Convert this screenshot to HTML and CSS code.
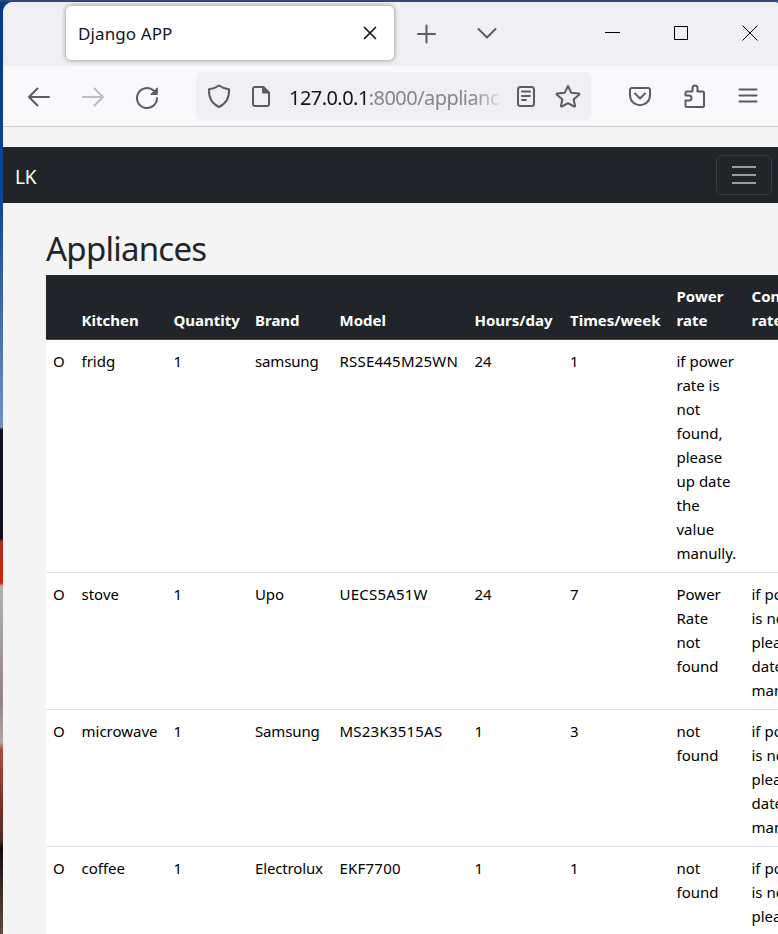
FILE: index.html
```html
<!DOCTYPE html>
<html lang="en">
<head>
<meta charset="utf-8">
<title>Django APP</title>
<link rel="stylesheet" href="styles.css">
</head>
<body>
<div class="window">
  <header class="tabs">
    <div class="tab"><span class="tab-title">Django APP</span>
      <svg class="tab-close" width="14" height="14" viewBox="0 0 14 14"><path d="M1.5 1.5l11 11M12.5 1.5l-11 11"/></svg>
    </div>
    <svg class="new-tab" width="20" height="20" viewBox="0 0 20 20"><path d="M10.500 1.500v17M2 10h17"/></svg>
    <svg class="tab-list" width="20" height="20" viewBox="0 0 20 20"><path d="M1.500 6l8.500 8.500L18.500 6"/></svg>
    <svg class="win minimize" width="16" height="16" viewBox="0 0 16 16"><path d="M1 7.500h15"/></svg>
    <svg class="win maximize" width="16" height="16" viewBox="0 0 16 16"><path d="M1.500 1.500h13v13h-13z"/></svg>
    <svg class="win close" width="16" height="16" viewBox="0 0 16 16"><path d="M.5.5l15 15M15.500.5l-15 15"/></svg>
  </header>
  <div class="toolbar">
    <svg class="icon back" viewBox="0 0 24 24"><path d="M22 13H2M10.500 4.500L2 13l8.500 8.500"/></svg>
    <svg class="icon forward" viewBox="0 0 24 24"><path d="M2 13h20M13.500 4.500L22 13l-8.500 8.500"/></svg>
    <svg class="icon reload" viewBox="0 0 24 24"><path d="M22 14a10 10 0 1 1-3.200-7.300"/><path class="fill" d="M22.300 4.200v6.200h-6.200z"/></svg>
    <div class="urlbar">
      <svg class="icon" viewBox="0 0 24 24"><path d="M12 1.500c3 2.200 6 3.400 10 3.800.3 7-1.800 14-10 17.700C3.800 19.300 1.700 12.300 2 5.300c4-.4 7-1.600 10-3.800z"/></svg>
      <svg class="icon page-icon" viewBox="0 0 24 24"><path d="M6 3h8.500l5.500 5.500V20a2 2 0 0 1-2 2H6a2 2 0 0 1-2-2V5a2 2 0 0 1 2-2z"/><path class="fill" d="M13.500 3V9h6z"/></svg>
      <div class="address"><span class="host">127.0.0.1</span>:8000/applianc</div>
      <svg class="icon reader" viewBox="0 0 24 24"><rect x="4" y="3" width="16" height="19" rx="2.500"/><path d="M8 7.500h8M8 12h8M8 16h4"/></svg>
      <svg class="icon star" viewBox="0 0 24 24"><path d="M12 1.800l3.100 6.900 7.600.8c.7.1.9.9.4 1.300l-5.500 4.600 1.500 6.300c.1.700-.5 1.100-1.100.8L12 19.200 6 22.500c-.6.3-1.200-.1-1.100-.8l1.500-6.300L.9 10.800c-.5-.4-.3-1.200.4-1.300l7.600-.8z"/></svg>
    </div>
    <svg class="icon pocket" viewBox="0 0 24 24"><path d="M4 4h16a2 2 0 0 1 2 2v5c0 13.500-20 13.500-20 0V6a2 2 0 0 1 2-2zM7 9.500l5 5 5-5"/></svg>
    <svg class="icon puzzle" viewBox="0 0 24 24"><path d="M4 7.500h5.500V4a2.500 2.500 0 0 1 5 0v3.500h5A1.500 1.500 0 0 1 21 9v12.500a1.500 1.500 0 0 1-1.500 1.500H4a1.500 1.500 0 0 1-1.500-1.500v-5H6a2.500 2.500 0 0 0 0-5H2.500V9A1.500 1.500 0 0 1 4 7.500z"/></svg>
    <svg class="icon menu" viewBox="0 0 24 24"><path d="M3.500 5.500h17M3.500 11.500h17M3.500 17.500h17"/></svg>
  </div>
  <main class="page">
    <nav class="navbar"><span class="brand">LK</span>
      <button class="toggler" aria-label="Menu"><svg width="30" height="30" viewBox="0 0 30 30"><path d="M3 7h24M3 15h24M3 23h24"/></svg></button>
    </nav>
    <section class="content">
      <h1>Appliances</h1>
      <table>
        <colgroup><col class="c0"><col class="c1"><col class="c2"><col class="c3"><col class="c4"><col class="c5"><col class="c6"><col class="c7"><col class="c8"></colgroup>
        <thead><tr><th></th><th>Kitchen</th><th>Quantity</th><th>Brand</th><th>Model</th><th>Hours/day</th><th>Times/week</th><th>Power<br>rate</th><th>Consumption<br>rate</th></tr></thead>
        <tbody>
          <tr><td>O</td><td>fridg</td><td>1</td><td class="make">samsung</td><td class="model">RSSE445M25WN</td><td>24</td><td>1</td><td>if power<br>rate is<br>not<br>found,<br>please<br>up date<br>the<br>value<br>manully.</td><td></td></tr>
          <tr><td>O</td><td>stove</td><td>1</td><td class="make">Upo</td><td class="model">UECS5A51W</td><td>24</td><td>7</td><td>Power<br>Rate<br>not<br>found</td><td>if power rate<br>is not found,<br>please up<br>date the value<br>manully.</td></tr>
          <tr><td>O</td><td>microwave</td><td>1</td><td class="make">Samsung</td><td class="model">MS23K3515AS</td><td>1</td><td>3</td><td>not<br>found</td><td>if power rate<br>is not found,<br>please up<br>date the value<br>manully.</td></tr>
          <tr><td>O</td><td>coffee</td><td>1</td><td class="make">Electrolux</td><td class="model">EKF7700</td><td>1</td><td>1</td><td>not<br>found</td><td>if power rate<br>is not found,<br>please up<br>date the value<br>manully.</td></tr>
        </tbody>
      </table>
    </section>
  </main>
</div>
</body>
</html>
```
FILE: styles.css
```css
* { box-sizing: border-box; }
html, body { height: 100%; overflow: hidden; }
body {
  margin: 0;
  padding: 2px 0 0 3px;
  font: 15px/24px "Noto Sans", "Open Sans", sans-serif;
  color: #000;
  background: linear-gradient(#2f4a78, #2f4a78) 0 0 / 100% 2px no-repeat,
    linear-gradient(#073984 0, #0d4597 200px, #4a70ac 330px, #6f91c0 427px, #15101f 430px, #120c1c 538px, #b03020 542px, #d42109 583px, #b5b0b0 586px, #8f8585 700px, #b5a5a2 742px, #b04b40 750px, #7c3026 805px, #4b2922 842px, #100c0c 848px, #3f2b29 890px, #604844 934px);
}
svg { flex: none; display: block; overflow: visible; fill: none; stroke: #5b5b66; stroke-width: 2; stroke-linecap: round; stroke-linejoin: round; }
.window { height: 932px; width: 775px; overflow: hidden; border-radius: 10px 3px 0 0; background: #f4f4f4; }
.tabs { height: 64px; display: flex; align-items: center; background: #f0f0f4; }
.tab { width: 328px; height: 54px; margin: -2px 0 0 63px; padding: 0 17px 0 12px; display: flex; align-items: center; justify-content: space-between; background: #fff; border-radius: 5px; box-shadow: 0 0 5px rgba(0, 0, 0, .45); }
.tab-title { font-size: 17px; color: #15141a; letter-spacing: .1px; padding-top: 2px; }
.tab-close { stroke: #15141a; stroke-width: 1.7; }
.new-tab { margin-left: 22px; }
.tab-list { margin: -3px 0 0 41px; }
.win { stroke: #000; stroke-width: 1; stroke-linecap: butt; margin-top: -2px; }
.minimize { margin-left: 107px; }
.maximize { margin-left: 53px; }
.close { margin-left: 53px; }
.toolbar { height: 61px; display: flex; align-items: center; background: #f9f9fb; border-bottom: 1px solid #ccc; padding-left: 24px; }
.icon { width: 24px; height: 24px; }
.forward { margin-left: 30px; stroke: #bcbcc1; }
.reload { margin-left: 30px; }
.fill { fill: #5b5b66; stroke-width: 1; }
.urlbar { width: 395px; height: 48px; margin-left: 37px; padding-left: 11px; border-radius: 5px; background: #f0f0f4; display: flex; align-items: center; }
.page-icon { margin-left: 18px; }
.address { width: 217px; margin-left: 16px; padding-top: 3px; overflow: hidden; white-space: nowrap; font-size: 20px; line-height: 32px; color: #85858a; letter-spacing: -.55px; -webkit-mask-image: linear-gradient(90deg, #000 84%, transparent 100%); mask-image: linear-gradient(90deg, #000 84%, transparent 100%); }
.host { color: #15141a; }
.reader { margin-left: 8px; }
.star { margin-left: 18px; }
.pocket { margin-left: 37px; }
.puzzle { margin-left: 31px; }
.menu { margin-left: 29px; }
.page { padding-top: 20px; }
.navbar { height: 56px; background: #212529; padding: 0 6px 0 12px; display: flex; align-items: center; justify-content: space-between; }
.brand { color: #fff; font-size: 19px; letter-spacing: -.3px; line-height: 30px; margin-top: 4px; }
.toggler { width: 56px; height: 40px; padding: 0 12px; border: 1px solid #373b3e; border-radius: 6px; background: none; }
.toggler svg { stroke: #9b9d9f; stroke-linecap: butt; }
.content { padding: 26px 0 0 43px; }
h1 { margin: 0; height: 46px; font-size: 33px; line-height: 40px; font-weight: 400; letter-spacing: -.75px; color: #212529; }
table { width: 805px; table-layout: fixed; border-collapse: separate; border-spacing: 0; background: #fff; }
.c0 { width: 27.500px; } .c1 { width: 92px; } .c2 { width: 81.500px; } .c3 { width: 84.500px; } .c4 { width: 135px; } .c5 { width: 95.500px; } .c6 { width: 106.500px; } .c7 { width: 75px; } .c8 { width: 107.500px; }
th, td { padding: 9px 8px 7px; text-align: left; white-space: nowrap; border-bottom: 1px solid #dee2e6; vertical-align: top; }
td:first-child { padding-left: 7px; }
.make { letter-spacing: -.15px; }
.model { letter-spacing: .22px; }
th { vertical-align: bottom; color: #fff; background: #212529; border-color: #4d5154; }
```
